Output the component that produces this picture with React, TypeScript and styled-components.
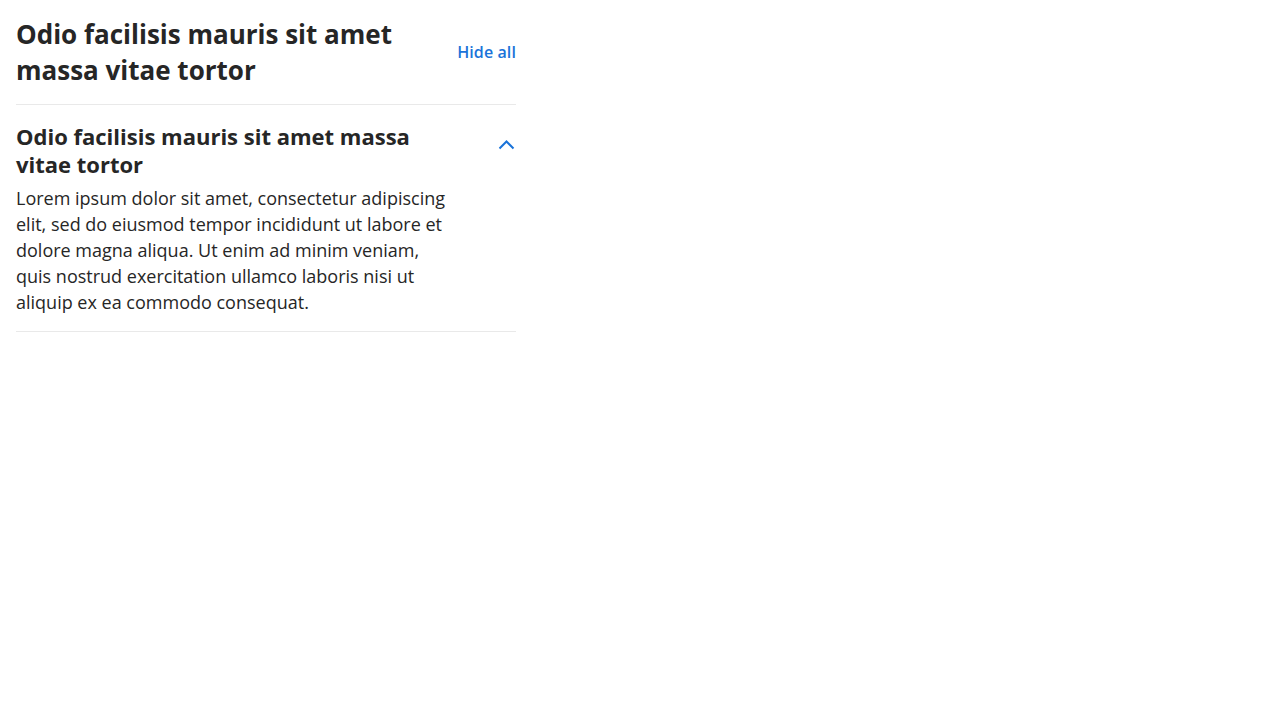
import styled, { createGlobalStyle } from "styled-components";

const GlobalStyle = createGlobalStyle`
  body {
    margin: 0;
    background: #ffffff;
    font-family: "Open Sans", "Noto Sans", sans-serif;
    color: #262626;
  }
`;

const Wrapper = styled("section")`
  width: 500px;
  padding: 0 16px;
`;

const Header = styled("header")`
  display: flex;
  align-items: center;
  justify-content: space-between;
  gap: 24px;
  padding: 16px 0 16px;
  border-bottom: 1px solid #e9e9e9;
`;

const Title = styled("h1")`
  margin: 0;
  max-width: 400px;
  font-size: 26px;
  line-height: 36px;
  font-weight: 700;
  color: #262626;
`;

const LinkButton = styled("button")`
  border: none;
  background: none;
  padding: 0;
  font-family: inherit;
  font-size: 16px;
  line-height: 24px;
  font-weight: 600;
  letter-spacing: 0.1px;
  color: #1a73d9;
  cursor: pointer;
`;

const Item = styled("div")`
  padding: 17px 0 16px;
  border-bottom: 1px solid #e9e9e9;
`;

const ItemHead = styled("div")`
  display: flex;
  align-items: flex-start;
  justify-content: space-between;
  gap: 24px;
`;

const ItemTitle = styled("h2")`
  margin: 0;
  flex: 1;
  font-size: 22px;
  line-height: 28px;
  font-weight: 700;
  color: #262626;
`;

const Toggle = styled("button")`
  display: flex;
  align-items: center;
  justify-content: flex-end;
  width: 24px;
  height: 24px;
  margin-top: 11px;
  border: none;
  background: none;
  padding: 0;
  color: #1a73d9;
  cursor: pointer;
`;

const Body = styled("p")`
  margin: 7px 0 0;
  max-width: 440px;
  font-size: 18px;
  line-height: 26px;
  color: #262626;
`;

function ChevronUp() {
  return (
    <svg width="18" height="18" viewBox="0 0 18 18" fill="none">
      <path d="M1.5 12.5 L8.5 5.5 L15.5 12.5" stroke="currentColor" strokeWidth="2" />
    </svg>
  );
}

export default function App() {
  return (
    <>
      <GlobalStyle />
      <Wrapper>
        <Header>
          <Title>Odio facilisis mauris sit amet massa vitae tortor</Title>
          <LinkButton>Hide all</LinkButton>
        </Header>
        <Item>
          <ItemHead>
            <ItemTitle>Odio facilisis mauris sit amet massa vitae tortor</ItemTitle>
            <Toggle aria-label="Collapse">
              <ChevronUp />
            </Toggle>
          </ItemHead>
          <Body>
            Lorem ipsum dolor sit amet, consectetur adipiscing elit, sed do eiusmod tempor
            incididunt ut labore et dolore magna aliqua. Ut enim ad minim veniam, quis nostrud
            exercitation ullamco laboris nisi ut aliquip ex ea commodo consequat.
          </Body>
        </Item>
      </Wrapper>
    </>
  );
}
